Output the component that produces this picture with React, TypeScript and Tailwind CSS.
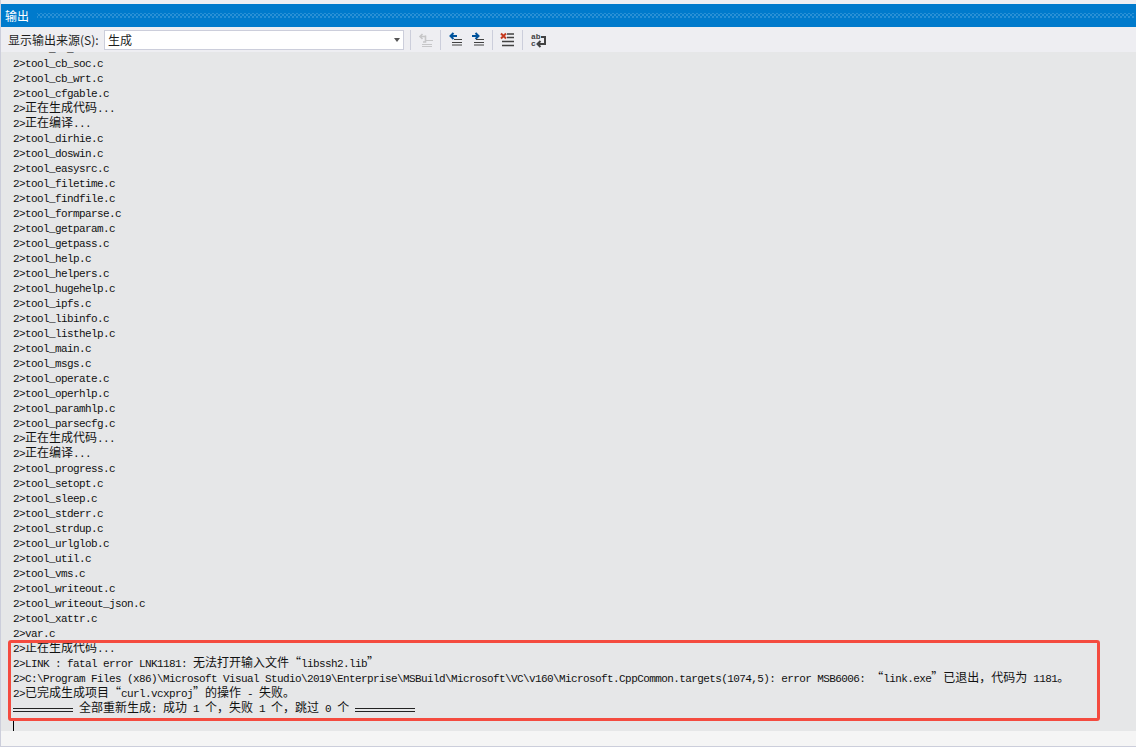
import React from 'react';

const cjkStack = '"Noto Sans CJK SC", sans-serif';

const lines = [
  'tool_cb_see.c', 'tool_cb_soc.c', 'tool_cb_wrt.c', 'tool_cfgable.c', '正在生成代码...', '正在编译...',
  'tool_dirhie.c', 'tool_doswin.c', 'tool_easysrc.c', 'tool_filetime.c', 'tool_findfile.c', 'tool_formparse.c',
  'tool_getparam.c', 'tool_getpass.c', 'tool_help.c', 'tool_helpers.c', 'tool_hugehelp.c', 'tool_ipfs.c',
  'tool_libinfo.c', 'tool_listhelp.c', 'tool_main.c', 'tool_msgs.c', 'tool_operate.c', 'tool_operhlp.c',
  'tool_paramhlp.c', 'tool_parsecfg.c', '正在生成代码...', '正在编译...', 'tool_progress.c', 'tool_setopt.c',
  'tool_sleep.c', 'tool_stderr.c', 'tool_strdup.c', 'tool_urlglob.c', 'tool_util.c', 'tool_vms.c',
  'tool_writeout.c', 'tool_writeout_json.c', 'tool_xattr.c', 'var.c', '正在生成代码...',
  'LINK : fatal error LNK1181: 无法打开输入文件“libssh2.lib”',
  'C:\\Program Files (x86)\\Microsoft Visual Studio\\2019\\Enterprise\\MSBuild\\Microsoft\\VC\\v160\\Microsoft.CppCommon.targets(1074,5): error MSB6006: “link.exe”已退出，代码为 1181。',
  '已完成生成项目“curl.vcxproj”的操作 - 失败。',
];

const OutputText: React.FC<{ text: string }> = ({ text }) => {
  const parts = text.split(/([\u3000-\u9fff\uff00-\uffef“”]+)/);
  return (
    <>
      {parts.map((p, i) =>
        i % 2 === 1 ? (
          <span key={i} className="text-[12px] leading-[0] tracking-normal font-['Noto_Sans_CJK_SC',sans-serif]">{p}</span>
        ) : (
          <span key={i}>{p}</span>
        ),
      )}
    </>
  );
};

const Rule = () => (
  <span className="inline-flex flex-col gap-[2px] w-[60px] h-[4px]">
    <span className="h-px bg-[#222]" />
    <span className="h-px bg-[#222]" />
  </span>
);

const Sep = () => <div className="w-px h-[20px] bg-[#cccedb]" />;

const App: React.FC = () => {
  return (
    <div className="w-[1136px] h-[747px] relative overflow-hidden flex flex-col bg-[#f5f5f5] border-l border-[#cccedb]" style={{ fontFamily: cjkStack }}>
      <div className="h-[4px] bg-[#eeeef2]" />
      <div className="h-[23px] bg-[#007acc] flex items-center pl-[4px] pr-[2px] gap-[8px]">
        <span className="text-[12px] text-white leading-none">输出</span>
        <div className="flex-1 h-[5px] bg-[radial-gradient(#59a8df_0.6px,transparent_0.8px),radial-gradient(#59a8df_0.6px,transparent_0.8px)] bg-[length:4px_4px] bg-[position:0_0,2px_2px]" />
      </div>
      <div className="h-[25px] pt-[1px] bg-[#eeeef2] flex items-center pl-[7px]">
        <span className="text-[12px] text-[#1e1e1e] w-[96px] whitespace-nowrap">显示输出来源(S):</span>
        <div className="w-[300px] h-[20px] bg-white border border-[#cccedb] flex items-center justify-between pl-[3px] pr-[3px]">
          <span className="text-[12px] text-[#1e1e1e] leading-none">生成</span>
          <span className="w-0 h-0 border-x-[3.5px] border-x-transparent border-t-[4px] border-t-[#555]" />
        </div>
        <div className="ml-[6px]"><Sep /></div>
        <svg width="16" height="16" viewBox="0 0 16 16" className="ml-[7px]" fill="none">
          <path d="M2 4.5h6M4.5 2L2 4.5 4.5 7" stroke="#c6c6c8" strokeWidth="1.6" />
          <path d="M7.5 3.5v6.5H5" stroke="#c6c6c8" strokeWidth="1.6" />
          <path d="M8 8.5h7" stroke="#c6c6c8" strokeWidth="1" />
          <path d="M4 12.5h10M4 14.5h10" stroke="#c6c6c8" strokeWidth="1.2" />
        </svg>
        <div className="ml-[6px]"><Sep /></div>
        <svg width="16" height="16" viewBox="0 0 16 16" className="ml-[7px]" fill="none">
          <path d="M3 4h6M5.5 1L2.5 4l3 3" stroke="#00539c" strokeWidth="2" />
          <path d="M6 7.5h8M4 10.5h10M4 13h10" stroke="#424242" strokeWidth="1.2" />
        </svg>
        <svg width="16" height="16" viewBox="0 0 16 16" className="ml-[6px]" fill="none">
          <path d="M2 4h6M5.5 1l3 3-3 3" stroke="#00539c" strokeWidth="2" />
          <path d="M6 7.5h8M4 10.5h10M4 13h10" stroke="#424242" strokeWidth="1.2" />
        </svg>
        <div className="ml-[6px]"><Sep /></div>
        <svg width="16" height="16" viewBox="0 0 16 16" className="ml-[6px]" fill="none">
          <path d="M2 1.5l5 5M7 1.5l-5 5" stroke="#c5391f" strokeWidth="2" />
          <path d="M8 2h7M8 5.5h7M3 9.5h12M3 13.5h12" stroke="#424242" strokeWidth="1.7" />
        </svg>
        <div className="ml-[7px]"><Sep /></div>
        <svg width="16" height="16" viewBox="0 0 16 16" className="ml-[7px]" fill="none">
          <text x="1" y="7" fontSize="8" fontFamily="Liberation Mono" fontWeight="700" fill="#424242">ab</text>
          <text x="1" y="13.5" fontSize="8" fontFamily="Liberation Mono" fontWeight="700" fill="#424242">c</text>
          <path d="M11 5h4v7H9" stroke="#424242" strokeWidth="2" />
          <path d="M10.5 9l-3 3 3 3" stroke="#424242" strokeWidth="2" />
        </svg>
      </div>
      <div className="h-[679px] bg-[#e6e7e8] overflow-hidden pl-[12px] text-[11px] tracking-[-0.6px] leading-[15px] text-[#111] font-['Liberation_Mono',monospace]">
        <div className="-mt-[10px]">
          {lines.map((l, i) => (
            <div key={i} className="h-[15px] whitespace-nowrap">
              2&gt;<OutputText text={l} />
            </div>
          ))}
          <div className="h-[15px] whitespace-nowrap flex items-center">
            <Rule />
            <span className="mx-[6px]"><OutputText text="全部重新生成: " /><OutputText text="成功 1 个，失败 1 个，跳过 0 个" /></span>
            <Rule />
          </div>
          <div className="h-[15px] flex items-center"><div className="w-px h-[14px] bg-black" /></div>
        </div>
      </div>
      <div className="absolute left-[7px] top-[640px] w-[1092px] h-[81px] border-[3px] border-[#f44b3f] rounded-[3px]" />
      <div className="absolute inset-x-0 bottom-0 h-px bg-[#cccedb]" />
    </div>
  );
};

export default App;
